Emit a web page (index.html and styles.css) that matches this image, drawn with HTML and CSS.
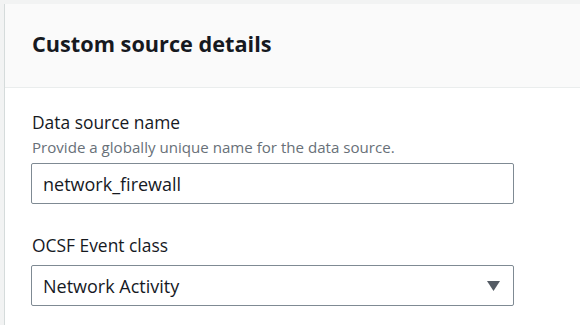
FILE: index.html
```html
<!DOCTYPE html>
<html>
<head>
<meta charset="utf-8">
<link rel="stylesheet" href="styles.css">
</head>
<body>
<div class="page">
  <section class="panel">
    <header class="panel-header">
      <h2 class="panel-title">Custom source details</h2>
    </header>
    <div class="panel-body">
      <div class="field">
        <label class="field-label">Data source name</label>
        <div class="field-desc">Provide a globally unique name for the data source.</div>
        <div class="input">network_firewall</div>
      </div>
      <div class="field field-second">
        <label class="field-label">OCSF Event class</label>
        <div class="input select">
          <span>Network Activity</span>
          <svg class="caret" width="13" height="10" viewBox="0 0 13 10"><path d="M0 0 H13 L6.5 10 Z" fill="#545b64"/></svg>
        </div>
      </div>
    </div>
  </section>
</div>
</body>
</html>
```
FILE: styles.css
```css
html, body {
  margin: 0;
  padding: 0;
}
body {
  background: #f2f3f3;
  font-family: "Open Sans", "Noto Sans", sans-serif;
  color: #16191f;
  width: 580px;
  height: 325px;
  overflow: hidden;
}
.page {
  padding: 4px 0 0 4px;
}
.panel {
  background: #ffffff;
  border-left: 1px solid #d5dbdb;
  height: 321px;
}
.panel-header {
  background: #fafafa;
  border-bottom: 1px solid #eaeded;
  height: 83px;
  box-sizing: border-box;
  height: 84px;
  padding: 0 0 4px 27px;
  display: flex;
  align-items: center;
}
.panel-title {
  margin: 0;
  font-size: 21.7px;
  font-weight: 700;
  line-height: 28px;
}
.panel-body {
  padding: 23px 0 0 27px;
}
.field {
  width: 483px;
  margin-left: -1px;
}
.field-label {
  display: block;
  font-size: 17.4px;
  line-height: 22px;
  padding-left: 1px;
}
.field-desc {
  margin-top: 4px;
  font-size: 15.1px;
  line-height: 20px;
  color: #687078;
  padding-left: 1px;
}
.input {
  margin-top: 6px;
  height: 41px;
  box-sizing: border-box;
  border: 1px solid #7f8a93;
  border-radius: 2px;
  padding: 0 12px 0 11px;
  display: flex;
  align-items: center;
  font-size: 18px;
}
.field-second {
  margin-top: 30px;
}
.field-second .input {
  margin-top: 9px;
}
.select {
  justify-content: space-between;
}
.caret {
  margin-right: 1px;
}
```
